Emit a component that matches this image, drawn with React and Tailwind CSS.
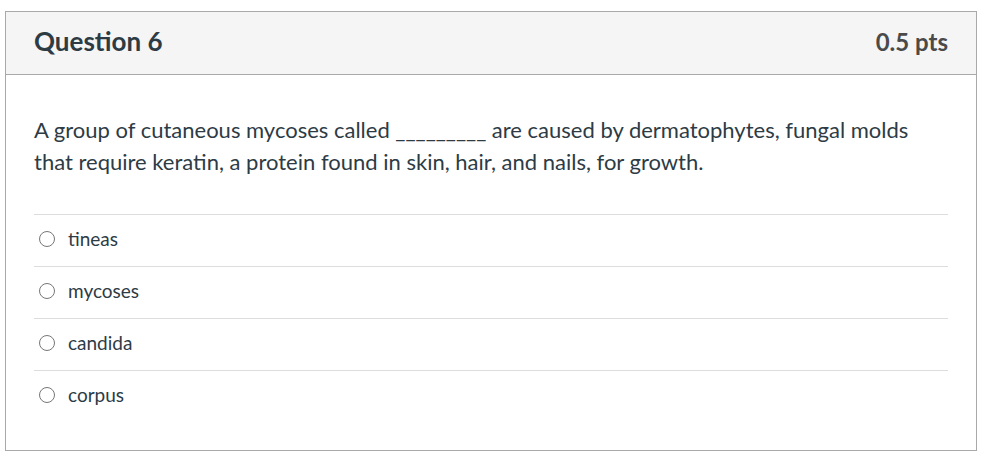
import React from 'react';

const answers = ['tineas', 'mycoses', 'candida', 'corpus'];

function Radio() {
  return (
    <span className="inline-block w-[16px] h-[16px] rounded-full border border-[#777777] bg-white shrink-0" />
  );
}

export default function App() {
  return (
    <div className="bg-white min-h-[471px] pl-[5px] pt-[11px]" style={{ fontFamily: 'Lato, "Noto Sans", sans-serif' }}>
      <div className="w-[972px] border border-[#a9a9a9] bg-white">
        <div className="h-[63px] bg-[#f5f5f5] border-b border-[#a9a9a9] flex items-center justify-between pl-[28px] pr-[28px] pb-[3px]">
          <h2 className="text-[26px] font-bold text-[#2d3b45]">Question 6</h2>
          <div className="text-[24px] font-bold text-[#4a4a4a]">0.5 pts</div>
        </div>

        <div className="px-[28px] pt-[39px] pb-[28px]">
          <p className="text-[22px] leading-[32px] text-[#2d3b45] max-w-[880px]">
            A group of cutaneous mycoses called _________ are caused by dermatophytes, fungal molds that require keratin, a protein found in skin, hair, and nails, for growth.
          </p>

          <div className="mt-[36px]">
            {answers.map((a) => (
              <label key={a} className="flex items-center gap-[13px] h-[52px] border-t border-[#dddddd] pl-[5px] pb-[3px] cursor-pointer">
                <Radio />
                <span className="text-[19px] text-[#2d3b45]">{a}</span>
              </label>
            ))}
          </div>
        </div>
      </div>
    </div>
  );
}
